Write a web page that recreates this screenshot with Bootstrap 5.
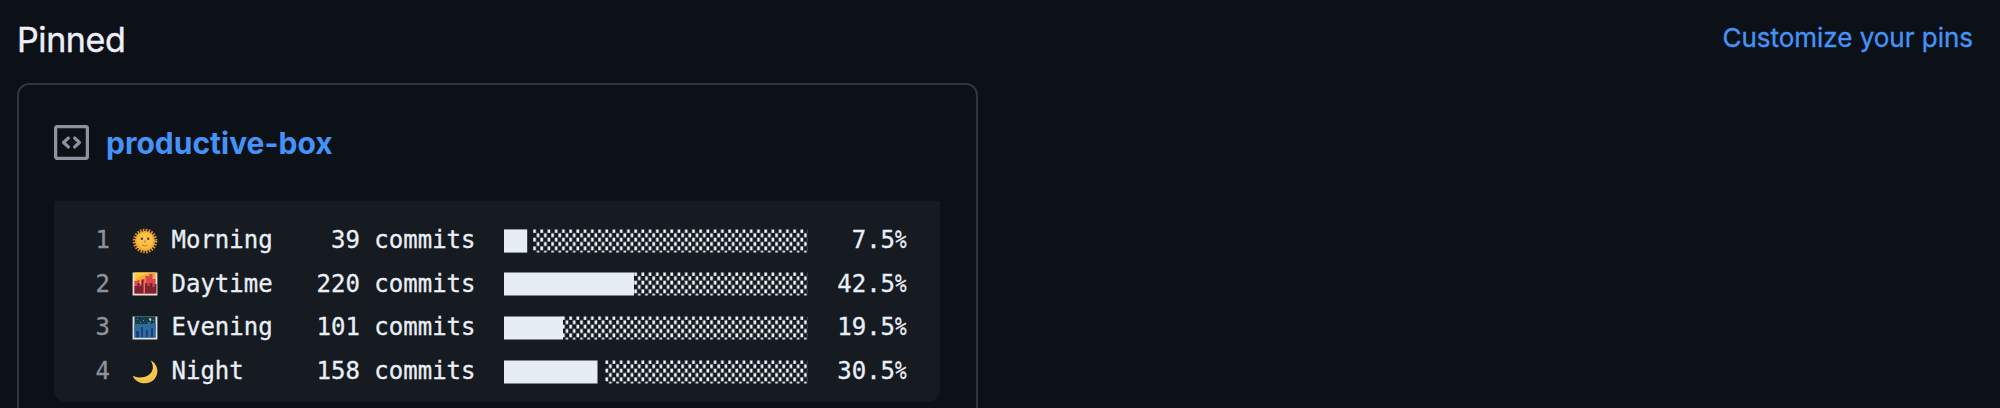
<!DOCTYPE html>
<html lang="en">
<head>
<meta charset="utf-8">
<meta name="viewport" content="width=device-width, initial-scale=1">
<title>Pinned</title>
<link href="https://cdn.jsdelivr.net/npm/bootstrap@5.3.0/dist/css/bootstrap.min.css" rel="stylesheet">
<style>
body{background:#0c1017;color:#e6edf3;font-family:Inter,"Liberation Sans",sans-serif;height:408px}
.pins-head{height:82.500px;padding:0 27px 0 17px}
.pins-title{font-size:34px;font-weight:400;line-height:40px;padding-top:20px;color:#eceff7;letter-spacing:-.4px;-webkit-text-stroke:.4px}
.pins-link{font-size:26px;line-height:32px;padding-top:22px;color:#4493f8;letter-spacing:-.02px;-webkit-text-stroke:.35px}
.pin-card{width:961px;height:325px;margin-left:17px;border:2px solid #30363d;border-bottom:0;border-radius:12px 12px 0 0;background:transparent;padding:40px 35px 0}
.pin-name{font-size:30px;font-weight:700;line-height:36px;color:#4493f8;letter-spacing:0;margin-left:17px}
.snippet{background:#161b22;width:886px;height:201px;border-radius:0 0 12px 12px;margin-top:40px;padding-top:18.400px;font:24px/43.7px "DejaVu Sans Mono",monospace;color:#eaeef6;-webkit-text-stroke:.3px}
.line{height:43.7px;white-space:pre}
.line-no{width:56px;color:#8b949e;text-align:right}
.emoji{width:26px;height:26px;margin-left:22px}
.part{width:102px;margin-left:13.500px}
.commits{width:159px;margin-left:43px;text-align:right}
.meter{width:304px;height:24px;margin-left:28px}
.share{width:87px;margin-left:15px;text-align:right}
.pct{transform:scaleX(.8);transform-origin:0 50%}
</style>
</head>
<body class="overflow-hidden">
<header class="pins-head d-flex justify-content-between align-items-start">
<h2 class="pins-title m-0">Pinned</h2>
<a href="#" class="pins-link text-decoration-none">Customize your pins</a>
</header>
<main class="card pin-card">
<div class="d-flex align-items-center">
<svg width="35" height="35" viewBox="0 0 35 35" fill="none" stroke="#8b949e" stroke-width="3.3"><rect x="1.6" y="1.6" width="31.8" height="31.8" rx="1.8"/><path d="M14.3 13.1 9.6 17.5l4.7 4.4M20.7 13.1l4.7 4.4-4.7 4.4" stroke-linecap="round" stroke-linejoin="round"/></svg>
<a href="#" class="pin-name text-decoration-none">productive-box</a>
</div>
<div class="snippet">
<div class="line d-flex align-items-center"><span class="line-no">1</span>
<svg class="emoji" viewBox="0 0 26 26"><circle cx="13" cy="13" r="10.8" fill="none" stroke="#e8992c" stroke-width="3" stroke-dasharray="1.5 1.35"/><circle cx="13" cy="13" r="10" fill="#f5ad32"/><circle cx="13" cy="12.5" r="7.7" fill="#ffc24a"/><circle cx="9.8" cy="10.7" r="1.3" fill="#604323"/><circle cx="16.2" cy="10.7" r="1.3" fill="#604323"/><path d="M10 17q3 2.2 6 0M13 12v3" fill="none" stroke="#ce7821"/></svg>
<span class="part">Morning</span><span class="commits">39 commits</span>
<svg class="meter" viewBox="0 0 304 24"><defs><pattern id="dots" width="7.225" height="8.7" patternUnits="userSpaceOnUse"><path d="M.3 0h2.6v3.9H.3zM3.9 4.350h2.6v3.900H3.9z" fill="#f6f8fc"/></pattern></defs><path d="M29 .4h274.5v23.2H29z" fill="url(#dots)"/><path d="M0 .4h23.2v23.2H0z" fill="#e6edf5"/></svg>
<span class="share">7.5<span class="pct d-inline-block">%</span></span></div>
<div class="line d-flex align-items-center"><span class="line-no">2</span>
<svg class="emoji" viewBox="0 0 26 26"><path d="M.6 1.5h24.8v23H.6z" fill="#e6dfdc"/><path d="M2.5 1.5h21v21h-21z" fill="#ffcf36"/><path d="M2.5 10 8 5l9-3h6.500v10h-21z" fill="#f9a934"/><path d="M2.500 22.500V10h3v-1h2v4h2V8h3v4h1V5h4V3h3v5h3v14.500z" fill="#d94654"/><path d="M2.500 22.500V15h3v-3h2v3h2V9h2v4h2v-1h2v3h2v-3h3v4h2v-3h2v9.500z" fill="#7d2230"/><path d="M11.500 12h1.500v10.500h-1.500z" fill="#f06d55"/></svg>
<span class="part">Daytime</span><span class="commits">220 commits</span>
<svg class="meter" viewBox="0 0 304 24"><path d="M130 .4h173.500v23.2H130z" fill="url(#dots)"/><path d="M0 .4h130v23.2H0z" fill="#e6edf5"/></svg>
<span class="share">42.5<span class="pct d-inline-block">%</span></span></div>
<div class="line d-flex align-items-center"><span class="line-no">3</span>
<svg class="emoji" viewBox="0 0 26 26"><path d="M.6 1.500h24.800v23H.6z" fill="#dce2e8"/><path d="M2.500 1.500h21v21h-21z" fill="#173c50"/><path d="M2.500 9h21v8h-21z" fill="#2c7080"/><path d="M2.500 22.500V13h3v-2h3v3h2V9h3v5h2V7h3v5h2V8h3v14.500z" fill="#3169a6"/><path d="M4 22v-6h3v6zM9 22V12h2v10zM14 22v-7h2v7zM19 22v-9h2v9z" fill="#1a4278"/><path d="M17 3q3 0 2 3-2 0-2-3" fill="#e8db76"/><path d="M5 4h1v1H5zM11 5h1v1h-1zM21 5h1v1h-1zM8 7h1v1H8z" fill="#5b9390"/></svg>
<span class="part">Evening</span><span class="commits">101 commits</span>
<svg class="meter" viewBox="0 0 304 24"><path d="M58 .4h245.500v23.2H58z" fill="url(#dots)"/><path d="M0 .4h59v23.2H0z" fill="#e6edf5"/></svg>
<span class="share">19.5<span class="pct d-inline-block">%</span></span></div>
<div class="line d-flex align-items-center"><span class="line-no">4</span>
<svg class="emoji" viewBox="0 0 26 26"><path d="M18.500 1.200C26 5 27.500 14 22.500 20 16 27 4 25 .7 16.700c8 4.200 18.800.6 20-6.700.6-3.600-.5-6.200-2.200-8.800z" fill="#f8cd52"/><path d="M2.500 18.500C10 23 22 20 23 8c4 11-7 18-15 14.500-3-1-4.500-2.500-5.500-4z" fill="#eeb63e" opacity=".5"/></svg>
<span class="part">Night</span><span class="commits">158 commits</span>
<svg class="meter" viewBox="0 0 304 24"><path d="M101.200 .4h202.300v23.2H101.200z" fill="url(#dots)"/><path d="M0 .4h93.500v23.2H0z" fill="#e6edf5"/></svg>
<span class="share">30.5<span class="pct d-inline-block">%</span></span></div>
</div>
</main>
<script src="https://cdn.jsdelivr.net/npm/bootstrap@5.3.0/dist/js/bootstrap.bundle.min.js"></script>
</body>
</html>
